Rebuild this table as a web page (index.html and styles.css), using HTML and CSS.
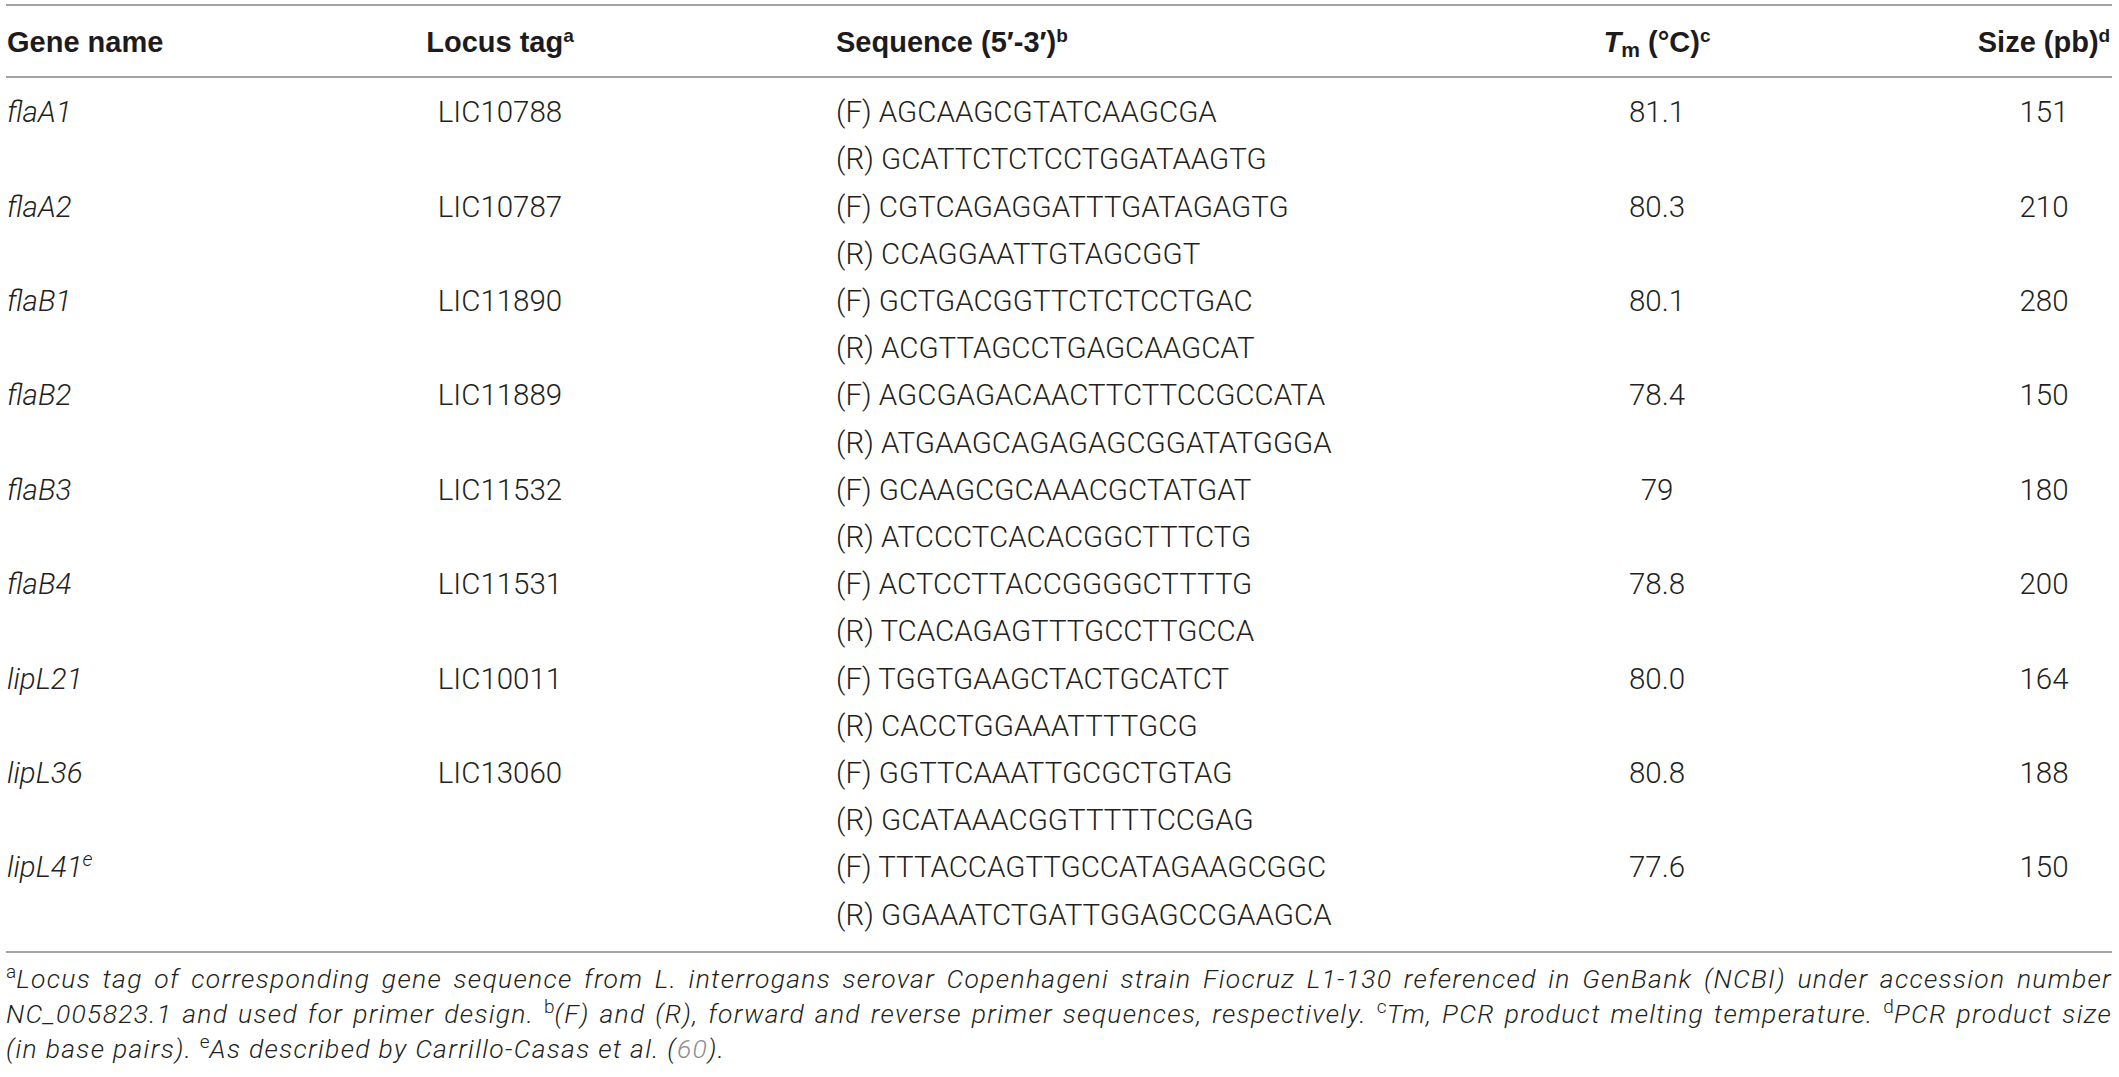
FILE: index.html
```
<!DOCTYPE html>
<html lang="en">
<head>
<meta charset="utf-8">
<title>Primers</title>
<link rel="stylesheet" href="styles.css">
</head>
<body>
<div class="page">
  <div class="table">
    <div class="row head">
      <div class="c-gene">Gene name</div>
      <div class="c-locus">Locus tag<sup>a</sup></div>
      <div class="c-seq">Sequence (5′-3′)<sup>b</sup></div>
      <div class="c-tm"><i>T</i><sub>m</sub> (°C)<sup>c</sup></div>
      <div class="c-size">Size (pb)<sup>d</sup></div>
    </div>
    <div class="tbody">
      <div class="row">
        <div class="c-gene gene">flaA1</div>
        <div class="c-locus">LIC10788</div>
        <div class="c-seq"><div>(F) AGCAAGCGTATCAAGCGA</div><div>(R) GCATTCTCTCCTGGATAAGTG</div></div>
        <div class="c-tm">81.1</div>
        <div class="c-size">151</div>
      </div>
      <div class="row">
        <div class="c-gene gene">flaA2</div>
        <div class="c-locus">LIC10787</div>
        <div class="c-seq"><div>(F) CGTCAGAGGATTTGATAGAGTG</div><div>(R) CCAGGAATTGTAGCGGT</div></div>
        <div class="c-tm">80.3</div>
        <div class="c-size">210</div>
      </div>
      <div class="row">
        <div class="c-gene gene">flaB1</div>
        <div class="c-locus">LIC11890</div>
        <div class="c-seq"><div>(F) GCTGACGGTTCTCTCCTGAC</div><div>(R) ACGTTAGCCTGAGCAAGCAT</div></div>
        <div class="c-tm">80.1</div>
        <div class="c-size">280</div>
      </div>
      <div class="row">
        <div class="c-gene gene">flaB2</div>
        <div class="c-locus">LIC11889</div>
        <div class="c-seq"><div>(F) AGCGAGACAACTTCTTCCGCCATA</div><div>(R) ATGAAGCAGAGAGCGGATATGGGA</div></div>
        <div class="c-tm">78.4</div>
        <div class="c-size">150</div>
      </div>
      <div class="row">
        <div class="c-gene gene">flaB3</div>
        <div class="c-locus">LIC11532</div>
        <div class="c-seq"><div>(F) GCAAGCGCAAACGCTATGAT</div><div>(R) ATCCCTCACACGGCTTTCTG</div></div>
        <div class="c-tm">79</div>
        <div class="c-size">180</div>
      </div>
      <div class="row">
        <div class="c-gene gene">flaB4</div>
        <div class="c-locus">LIC11531</div>
        <div class="c-seq"><div>(F) ACTCCTTACCGGGGCTTTTG</div><div>(R) TCACAGAGTTTGCCTTGCCA</div></div>
        <div class="c-tm">78.8</div>
        <div class="c-size">200</div>
      </div>
      <div class="row">
        <div class="c-gene gene">lipL21</div>
        <div class="c-locus">LIC10011</div>
        <div class="c-seq"><div>(F) TGGTGAAGCTACTGCATCT</div><div>(R) CACCTGGAAATTTTGCG</div></div>
        <div class="c-tm">80.0</div>
        <div class="c-size">164</div>
      </div>
      <div class="row">
        <div class="c-gene gene">lipL36</div>
        <div class="c-locus">LIC13060</div>
        <div class="c-seq"><div>(F) GGTTCAAATTGCGCTGTAG</div><div>(R) GCATAAACGGTTTTTCCGAG</div></div>
        <div class="c-tm">80.8</div>
        <div class="c-size">188</div>
      </div>
      <div class="row">
        <div class="c-gene gene">lipL41<sup>e</sup></div>
        <div class="c-locus"></div>
        <div class="c-seq"><div>(F) TTTACCAGTTGCCATAGAAGCGGC</div><div>(R) GGAAATCTGATTGGAGCCGAAGCA</div></div>
        <div class="c-tm">77.6</div>
        <div class="c-size">150</div>
      </div>
    </div>
  </div>
  <div class="notes">
    <div class="line just"><sup>a</sup>Locus tag of corresponding gene sequence from L. interrogans serovar Copenhageni strain Fiocruz L1-130 referenced in GenBank (NCBI) under accession number</div>
    <div class="line just">NC_005823.1 and used for primer design. <sup>b</sup>(F) and (R), forward and reverse primer sequences, respectively. <sup>c</sup>Tm, PCR product melting temperature. <sup>d</sup>PCR product size</div>
    <div class="line">(in base pairs). <sup>e</sup>As described by Carrillo-Casas et al. (<span class="ref">60</span>).</div>
  </div>
</div>
</body>
</html>
```
FILE: styles.css
```
html, body {
  margin: 0;
  padding: 0;
  background: #ffffff;
}
body {
  color: #231f20;
  font-family: Roboto, "Liberation Sans", Arial, sans-serif;
  font-weight: 300;
}
.page {
  padding: 4px 7px 0 6px;
}
.table {
  border-top: 2px solid #a4a4a4;
  border-bottom: 2px solid #a4a4a4;
}
.row {
  display: grid;
  grid-template-columns: 158px 672px 502px 638px 136px;
  white-space: nowrap;
}
.head {
  height: 70px;
  border-bottom: 2px solid #a4a4a4;
  font-family: "Liberation Sans", Arial, sans-serif;
  font-weight: 700;
  font-size: 29px;
  color: #1e1b1c;
}
.head > div {
  line-height: 68px;
  padding-top: 2px;
}
.head sup {
  font-size: 19px;
  line-height: 0;
  vertical-align: 10px;
}
.head sub {
  font-size: 21px;
  line-height: 0;
  vertical-align: -5px;
}
.head i {
  font-style: italic;
}
.tbody {
  padding: 11.2px 0 12.2px;
}
.tbody .row > div {
  font-size: 29.5px;
  line-height: 47.2px;
}
.c-gene {
  text-align: left;
  padding-left: 1px;
}
.c-locus {
  text-align: center;
}
.c-seq {
  text-align: left;
}
.c-tm {
  text-align: center;
}
.c-size {
  text-align: center;
}
.gene {
  font-style: italic;
}
.gene sup {
  font-size: 20px;
  line-height: 0;
  vertical-align: 11px;
}
.notes {
  padding-top: 8px;
  font-size: 26.5px;
  line-height: 35px;
  letter-spacing: 1.3px;
  font-style: italic;
}
.notes .line {
  white-space: nowrap;
}
.notes .just {
  text-align: justify;
  text-align-last: justify;
}
.notes sup {
  font-style: normal;
  font-size: 19px;
  line-height: 0;
  vertical-align: 10px;
  letter-spacing: 0;
}
.notes .ref {
  color: #8c8c8c;
}
```
